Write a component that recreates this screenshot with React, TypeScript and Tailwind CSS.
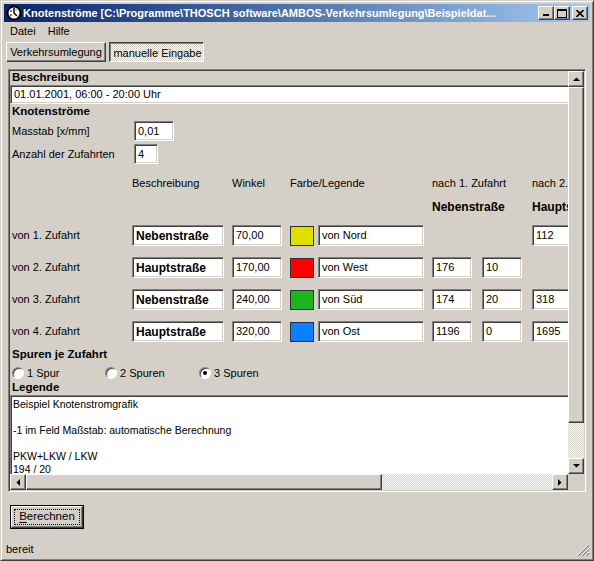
import React from 'react';

const raised =
  'bg-[#d4d0c8] border border-t-white border-l-white border-b-[#404040] border-r-[#404040] shadow-[inset_-1px_-1px_0_#808080]';
const sunken =
  'bg-white border border-t-[#808080] border-l-[#808080] border-b-white border-r-white shadow-[inset_1px_1px_0_#404040,inset_-1px_-1px_0_#d4d0c8]';
const dither = 'bg-[image:repeating-conic-gradient(#d4d0c8_0_25%,#ffffff_0_50%)] bg-[length:2px_2px]';

interface EditProps {
  value?: string;
  w: string;
  bold?: boolean;
  h?: string;
}

const Edit: React.FC<EditProps> = ({ value, w, bold, h = 'h-[21px]' }) => (
  <div className={`${sunken} ${w} ${h} shrink-0 flex items-center pl-[3px] whitespace-nowrap overflow-hidden ${bold ? 'font-bold text-[12px]' : ''}`}>
    {value}
  </div>
);

const rows = [
  { label: 'von 1. Zufahrt', name: 'Nebenstraße', angle: '70,00', color: 'bg-[#e0e000]', legend: 'von Nord', n1: null, n2: ['112', '4'] },
  { label: 'von 2. Zufahrt', name: 'Hauptstraße', angle: '170,00', color: 'bg-[#ff0000]', legend: 'von West', n1: ['176', '10'], n2: null },
  { label: 'von 3. Zufahrt', name: 'Nebenstraße', angle: '240,00', color: 'bg-[#1cb41c]', legend: 'von Süd', n1: ['174', '20'], n2: ['318', '28'] },
  { label: 'von 4. Zufahrt', name: 'Hauptstraße', angle: '320,00', color: 'bg-[#0a80ff]', legend: 'von Ost', n1: ['1196', '0'], n2: ['1695', '64'] },
];

const Arrow: React.FC<{ dir: 'up' | 'down' | 'left' | 'right' }> = ({ dir }) => {
  const pts = {
    up: '0,4 7,4 3.5,0.5',
    down: '0,0 7,0 3.5,3.5',
    left: '4,0 4,7 0.5,3.5',
    right: '0,0 0,7 3.5,3.5',
  }[dir];
  const vertical = dir === 'up' || dir === 'down';
  return (
    <div className={`${raised} w-[16px] h-[16px] shrink-0 flex items-center justify-center`}>
      <svg width={vertical ? 7 : 4} height={vertical ? 4 : 7} viewBox={vertical ? '0 0 7 4' : '0 0 4 7'}>
        <polygon points={pts} fill="#000" />
      </svg>
    </div>
  );
};

const Radio: React.FC<{ checked?: boolean; label: string; w: string }> = ({ checked, label, w }) => (
  <div className={`flex items-center ${w}`}>
    <div className="w-[12px] h-[12px] rounded-full bg-white border border-t-[#808080] border-l-[#808080] border-b-white border-r-white shadow-[inset_1px_1px_0_#404040] flex items-center justify-center">
      {checked && <div className="w-[4px] h-[4px] rounded-full bg-black" />}
    </div>
    <span className="ml-[3px]">{label}</span>
  </div>
);

export default function App() {
  return (
    <div className="w-[594px] h-[561px] bg-[#d4d0c8] border border-t-[#d4d0c8] border-l-[#d4d0c8] border-b-[#404040] border-r-[#404040] shadow-[inset_1px_1px_0_#ffffff,inset_-1px_-1px_0_#808080] p-[3px] flex flex-col font-['Liberation_Sans',Arial,sans-serif] text-[11px] text-black leading-none overflow-hidden">
      {/* title bar */}
      <div className="h-[18px] shrink-0 flex items-center bg-linear-to-r from-[#0a246a] to-[#a6caf0] pl-[2px] pr-[2px]">
        <svg width="16" height="16" viewBox="0 0 16 16" className="shrink-0">
          <circle cx="8" cy="8" r="7.5" fill="#000" />
          <circle cx="8" cy="8" r="5.5" fill="#fff" />
          <path d="M8 3v5l3 3" stroke="#000" strokeWidth="1.5" fill="none" />
          <path d="M4 6h2M4 10h2M10 4.5l1 1" stroke="#000" strokeWidth="1" />
        </svg>
        <span className="ml-[1px] text-white font-bold text-[11px] whitespace-nowrap overflow-hidden flex-1">
          Knotenströme [C:\Programme\THOSCH software\AMBOS-Verkehrsumlegung\Beispieldat...
        </span>
        <div className={`${raised} w-[16px] h-[14px] flex items-center justify-center`}>
          <svg width="8" height="8" viewBox="0 0 8 8">
            <rect x="1" y="5" width="6" height="2" fill="#000" />
          </svg>
        </div>
        <div className={`${raised} w-[16px] h-[14px] flex items-center justify-center`}>
          <svg width="10" height="9" viewBox="0 0 10 9">
            <rect x="0.5" y="0.5" width="9" height="8" fill="none" stroke="#000" />
            <rect x="0" y="0" width="10" height="2" fill="#000" />
          </svg>
        </div>
        <div className={`${raised} w-[16px] h-[14px] ml-[2px] flex items-center justify-center`}>
          <svg width="8" height="7" viewBox="0 0 8 7">
            <path d="M0.5 0l7 7M7.5 0l-7 7" stroke="#000" strokeWidth="1.6" />
          </svg>
        </div>
      </div>

      {/* menu */}
      <div className="h-[19px] shrink-0 flex items-center">
        <span className="px-[6px]">Datei</span>
        <span className="px-[6px]">Hilfe</span>
      </div>

      {/* mode buttons */}
      <div className="mt-[1px] h-[20px] shrink-0 flex gap-[3px] pl-[2px]">
        <div className={`${raised} w-[100px] h-[20px] flex items-center justify-center`}>Verkehrsumlegung</div>
        <div className={`w-[95px] h-[20px] border border-t-[#404040] border-l-[#404040] border-b-white border-r-white shadow-[inset_1px_1px_0_#808080] ${dither} flex items-center justify-center pt-[2px] pl-[2px]`}>
          manuelle Eingabe
        </div>
      </div>

      {/* scroll box */}
      <div className="mt-[7px] ml-[4px] w-[578px] h-[423px] shrink-0 border border-t-[#808080] border-l-[#808080] border-b-white border-r-white shadow-[inset_1px_1px_0_#404040,inset_-1px_-1px_0_#d4d0c8] p-[1px] flex">
        <div className="w-[558px] flex flex-col">
          <div className="w-[558px] h-[403px] overflow-hidden">
            <div className="w-[720px] flex flex-col">
              <div className="h-[14px] flex items-center pl-[2px] font-bold text-[11.5px]">Beschreibung</div>
              <div className={`${sunken} h-[19px] w-[720px] flex items-center pl-[3px]`}>01.01.2001, 06:00 - 20:00 Uhr</div>
              <div className="h-[15px] flex items-center pl-[2px] font-bold text-[11.5px]">Knotenströme</div>
              <div className="mt-[2px] h-[20px] flex items-center">
                <span className="w-[124px] pl-[2px] shrink-0">Masstab [x/mm]</span>
                <Edit value="0,01" w="w-[40px]" h="h-[20px]" />
              </div>
              <div className="mt-[3px] h-[20px] flex items-center">
                <span className="w-[124px] pl-[2px] shrink-0">Anzahl der Zufahrten</span>
                <Edit value="4" w="w-[24px]" h="h-[20px]" />
              </div>
              <div className="mt-[12px] h-[14px] flex items-center whitespace-nowrap">
                <span className="w-[122px] shrink-0" />
                <span className="w-[100px] shrink-0">Beschreibung</span>
                <span className="w-[58px] shrink-0">Winkel</span>
                <span className="w-[142px] shrink-0">Farbe/Legende</span>
                <span className="w-[100px] shrink-0">nach 1. Zufahrt</span>
                <span>nach 2. Zufahrt</span>
              </div>
              <div className="mt-[10px] h-[14px] flex items-center whitespace-nowrap font-bold text-[12px]">
                <span className="w-[422px] shrink-0" />
                <span className="w-[100px] shrink-0">Nebenstraße</span>
                <span>Hauptstraße</span>
              </div>
              <div className="mt-[11px] flex flex-col gap-[11px]">
                {rows.map((r) => (
                  <div key={r.label} className="h-[21px] flex items-center">
                    <span className="w-[122px] pl-[2px] shrink-0">{r.label}</span>
                    <Edit value={r.name} w="w-[92px]" bold />
                    <div className="ml-[8px]"><Edit value={r.angle} w="w-[50px]" /></div>
                    <div className={`ml-[8px] w-[24px] h-[20px] shrink-0 border border-[#303030] ${r.color}`} />
                    <div className="ml-[4px]"><Edit value={r.legend} w="w-[106px]" /></div>
                    <div className="ml-[8px] w-[90px] shrink-0 flex gap-[10px]">
                      {r.n1 && (
                        <>
                          <Edit value={r.n1[0]} w="w-[40px]" />
                          <Edit value={r.n1[1]} w="w-[40px]" />
                        </>
                      )}
                    </div>
                    <div className="ml-[10px] flex gap-[10px]">
                      {r.n2 && (
                        <>
                          <Edit value={r.n2[0]} w="w-[40px]" />
                          <Edit value={r.n2[1]} w="w-[40px]" />
                        </>
                      )}
                    </div>
                  </div>
                ))}
              </div>
              <div className="mt-[6px] h-[14px] flex items-center pl-[2px] font-bold text-[11.5px]">Spuren je Zufahrt</div>
              <div className="mt-[4px] h-[14px] flex items-center pl-[2px]">
                <Radio label="1 Spur" w="w-[93px]" />
                <Radio label="2 Spuren" w="w-[94px]" />
                <Radio label="3 Spuren" checked w="w-[94px]" />
              </div>
              <div className="mt-[1px] h-[14px] flex items-center pl-[2px] font-bold text-[11.5px]">Legende</div>
              <div className="h-[79px] w-[720px] bg-white border-t border-l border-t-[#808080] border-l-[#808080] shadow-[inset_1px_1px_0_#404040] pl-[2px] pt-[2px] leading-[13px] text-[10.5px]">
                <div>Beispiel Knotenstromgrafik</div>
                <div>&nbsp;</div>
                <div>-1 im Feld Maßstab: automatische Berechnung</div>
                <div>&nbsp;</div>
                <div>PKW+LKW / LKW</div>
                <div>194 / 20</div>
              </div>
            </div>
          </div>
          {/* horizontal scrollbar */}
          <div className="h-[16px] flex">
            <Arrow dir="left" />
            <div className={`${raised} w-[356px] h-[16px]`} />
            <div className={`flex-1 h-[16px] ${dither}`} />
            <Arrow dir="right" />
          </div>
        </div>
        {/* vertical scrollbar */}
        <div className="w-[16px] flex flex-col">
          <Arrow dir="up" />
          <div className={`${raised} h-[336px] w-[16px]`} />
          <div className={`h-[35px] w-[16px] ${dither}`} />
          <Arrow dir="down" />
          <div className="h-[16px] bg-[#d4d0c8]" />
        </div>
      </div>

      {/* default button */}
      <div className="mt-[13px] ml-[6px] w-[74px] h-[24px] shrink-0 border border-black">
        <div className={`${raised} w-full h-full p-[2px]`}>
          <div className="w-full h-full border border-dotted border-black flex items-center justify-center text-[11.5px]">
            <span><span className="underline underline-offset-2">B</span>erechnen</span>
          </div>
        </div>
      </div>

      {/* status bar */}
      <div className="mt-auto h-[16px] shrink-0 flex items-center justify-between pl-[2px]">
        <span>bereit</span>
        <svg width="13" height="13" viewBox="0 0 13 13" className="self-end">
          <path d="M12 1L1 12M12 5L5 12M12 9L9 12" stroke="#808080" strokeWidth="1.4" />
          <path d="M12 0L0 12M12 4L4 12M12 8L8 12" stroke="#ffffff" strokeWidth="0.9" />
        </svg>
      </div>
    </div>
  );
}
